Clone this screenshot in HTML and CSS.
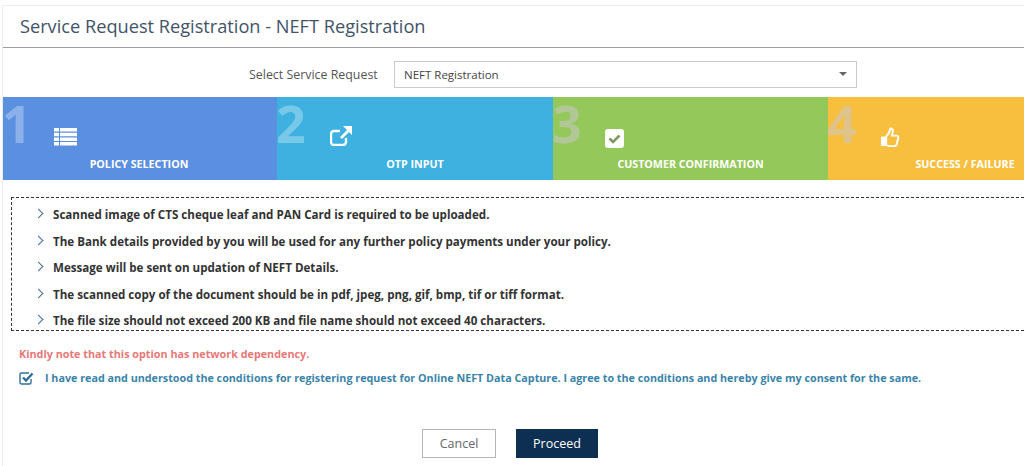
FILE: index.html
```html
<html>
  <head>
    <title>Service Request Registration</title>
    <link rel="stylesheet" href="styles.css">
  </head>
  <body>
    <div class="page">
      <h1 class="pageTitle">Service Request Registration - NEFT Registration</h1>

      <div class="selectRow">
        <label class="selectLabel">Select Service Request</label>
        <div class="selectBox">
          <span>NEFT Registration</span>
          <span class="selectCaret"></span>
        </div>
      </div>

      <div class="steps">
        <div class="step stepBlue">
          <span class="stepNum">1</span>
          <svg class="stepIcon iconList" viewBox="0 0 23 18" width="23" height="18">
            <path fill="#fff" d="M0 0h23v3.500H0zM0 4.700h23v3.500H0zM0 9.400h23v3.500H0zM0 14.100h23v3.500H0z"/>
            <path fill="#5b8fe0" d="M5 0h1v18H5z"/>
          </svg>
          <span class="stepName">POLICY SELECTION</span>
        </div>
        <div class="step stepCyan">
          <span class="stepNum">2</span>
          <svg class="stepIcon iconShare" viewBox="0 0 22 20" width="22" height="20">
            <path fill="none" stroke="#fff" stroke-width="2.400" d="M16 12v4a3 3 0 0 1-3 3H4a3 3 0 0 1-3-3V8a3 3 0 0 1 3-3h6"/>
            <path fill="#fff" d="M13 0h9v9l-3-3-7 7-2-2 7-7z"/>
          </svg>
          <span class="stepName">OTP INPUT</span>
        </div>
        <div class="step stepGreen">
          <span class="stepNum">3</span>
          <svg class="stepIcon iconCheck" viewBox="0 0 19 19" width="19" height="19">
            <rect width="19" height="19" rx="3" fill="#fff"/>
            <path fill="none" stroke="#7f9a5c" stroke-width="2.600" d="M4.500 9.500l3.500 3.500 6.500-6.500"/>
          </svg>
          <span class="stepName">CUSTOMER CONFIRMATION</span>
        </div>
        <div class="step stepYellow">
          <span class="stepNum">4</span>
          <svg class="stepIcon iconThumb" viewBox="0 0 20 22" width="20" height="21">
            <path fill="none" stroke="#fff" stroke-width="2" d="M6 10c2-2 4-4 4-8 0-1 3-1 3 2 0 2-1 3-1 5h5c2 0 2 2 1.500 3l-1.500 6c-.5 2-1.500 2-3 2H9c-1.500 0-2-1-3-1z"/>
            <rect x="0.500" y="10" width="5" height="10" rx="1" fill="#fff"/>
          </svg>
          <span class="stepName">SUCCESS / FAILURE</span>
        </div>
      </div>

      <ul class="notes">
        <li>Scanned image of CTS cheque leaf and PAN Card is required to be uploaded.</li>
        <li>The Bank details provided by you will be used for any further policy payments under your policy.</li>
        <li>Message will be sent on updation of NEFT Details.</li>
        <li>The scanned copy of the document should be in pdf, jpeg, png, gif, bmp, tif or tiff format.</li>
        <li>The file size should not exceed 200 KB and file name should not exceed 40 characters.</li>
      </ul>

      <p class="warning">Kindly note that this option has network dependency.</p>

      <div class="consent">
        <svg class="consentBox" viewBox="0 0 15 14" width="15" height="14">
          <path fill="none" stroke="#2f7196" stroke-width="1.400" d="M12 8v3.500a1.500 1.500 0 0 1-1.500 1.500h-8A1.500 1.500 0 0 1 1 11.500v-8A1.500 1.500 0 0 1 2.500 2H10"/>
          <path fill="none" stroke="#2f7196" stroke-width="2.400" d="M4 6.500l3 3 6.500-7"/>
        </svg>
        <span>I have read and understood the conditions for registering request for Online NEFT Data Capture. I agree to the conditions and hereby give my consent for the same.</span>
      </div>

      <div class="actions">
        <button type="button" class="btnCancel">Cancel</button>
        <button type="button" class="btnProceed">Proceed</button>
      </div>
    </div>
  </body>
</html>
```

FILE: styles.css
```css
html,
body {
  margin: 0;
  height: 466px;
  overflow: hidden;
  background-color: #fff;
}

body {
  font-family: "Open Sans", "Noto Sans", sans-serif;
}

.page {
  margin-top: 5px;
  margin-left: 2px;
  border-top: 1px solid #ececec;
  border-left: 1px solid #ececec;
  box-sizing: border-box;
  height: 461px;
}

.pageTitle {
  margin: 0;
  height: 42px;
  padding-left: 17px;
  box-sizing: border-box;
  border-bottom: 1px solid #9a9fa5;
  font-size: 18.200px;
  font-weight: 400;
  line-height: 41px;
  color: #3f5468;
}

.selectRow {
  display: flex;
  align-items: center;
  height: 49px;
  padding-top: 3px;
  padding-left: 246px;
  box-sizing: border-box;
}

.selectLabel {
  width: 145px;
  font-size: 12.400px;
  color: #555;
}

.selectBox {
  display: flex;
  justify-content: space-between;
  align-items: center;
  width: 463px;
  height: 27px;
  box-sizing: border-box;
  padding: 0 9px 0 9px;
  border: 1px solid #ccc;
  font-size: 11.500px;
  color: #444;
}

.selectCaret {
  border-top: 4px solid #666;
  border-left: 4px solid transparent;
  border-right: 4px solid transparent;
}

.steps {
  display: grid;
  grid-template-columns: 274px 276px 275px 1fr;
  height: 83px;
}

.step {
  position: relative;
  height: 83px;
  color: #fff;
}

.stepBlue {
  background-color: #5b8fe0;
}

.stepCyan {
  background-color: #3eb1e0;
}

.stepGreen {
  background-color: #95c85a;
}

.stepYellow {
  background-color: #f8bf3f;
}

.stepNum {
  position: absolute;
  left: -1px;
  top: -4px;
  font-size: 52px;
  font-weight: 700;
  line-height: 60px;
  color: rgba(255, 255, 255, 0.3);
}

.stepGreen .stepNum,
.stepYellow .stepNum {
  color: rgba(200, 200, 200, 0.55);
}

.stepIcon {
  position: absolute;
}

.iconList {
  left: 51px;
  top: 31px;
}

.iconShare {
  left: 53px;
  top: 29px;
}

.iconCheck {
  left: 52px;
  top: 32px;
}

.iconThumb {
  left: 52px;
  top: 30px;
}

.stepName {
  position: absolute;
  left: 0;
  right: 0;
  top: 60px;
  text-align: center;
  font-size: 10.700px;
  font-weight: 700;
  line-height: 14px;
}

.stepBlue .stepName {
  padding-right: 2px;
}

.stepYellow .stepName {
  left: 87px;
  right: auto;
  width: 100px;
  white-space: nowrap;
}

.notes {
  list-style: none;
  margin: 17px 0 0 8px;
  padding: 0 0 0 41px;
  height: 134px;
  overflow: hidden;
  box-sizing: border-box;
  border-top: 1px dashed #333;
  border-bottom: 1px dashed #333;
  border-left: 1px dashed #333;
  font-size: 11.600px;
  font-weight: 700;
  color: #333;
}

.notes li {
  position: relative;
  height: 26.500px;
  line-height: 26px;
}

.notes li:first-child {
  margin-top: 4px;
}

.notes li::before {
  content: "";
  position: absolute;
  left: -18px;
  top: 8px;
  width: 6px;
  height: 6px;
  border-top: 1.500px solid #3b6f96;
  border-right: 1.500px solid #3b6f96;
  transform: rotate(45deg);
}

.warning {
  margin: 16px 0 0 16px;
  font-size: 10.800px;
  font-weight: 700;
  line-height: 14px;
  color: #e87878;
}

.consent {
  display: flex;
  align-items: center;
  margin: 10px 0 0 16px;
  height: 14px;
  font-size: 10.750px;
  font-weight: 700;
  white-space: nowrap;
  color: #3a84aa;
}

.consentBox {
  margin-right: 11px;
}

.actions {
  display: flex;
  gap: 20px;
  margin-top: 44px;
  padding-left: 419px;
}

.btnCancel,
.btnProceed {
  height: 29px;
  font-family: "Open Sans", sans-serif;
  font-size: 12.500px;
  padding: 0;
  border-radius: 0;
}

.btnCancel {
  width: 74px;
  background-color: #fff;
  border: 1px solid #b5b5b5;
  color: #666;
}

.btnProceed {
  width: 82px;
  background-color: #0d2f52;
  border: 1px solid #0d2f52;
  color: #fff;
}
```
